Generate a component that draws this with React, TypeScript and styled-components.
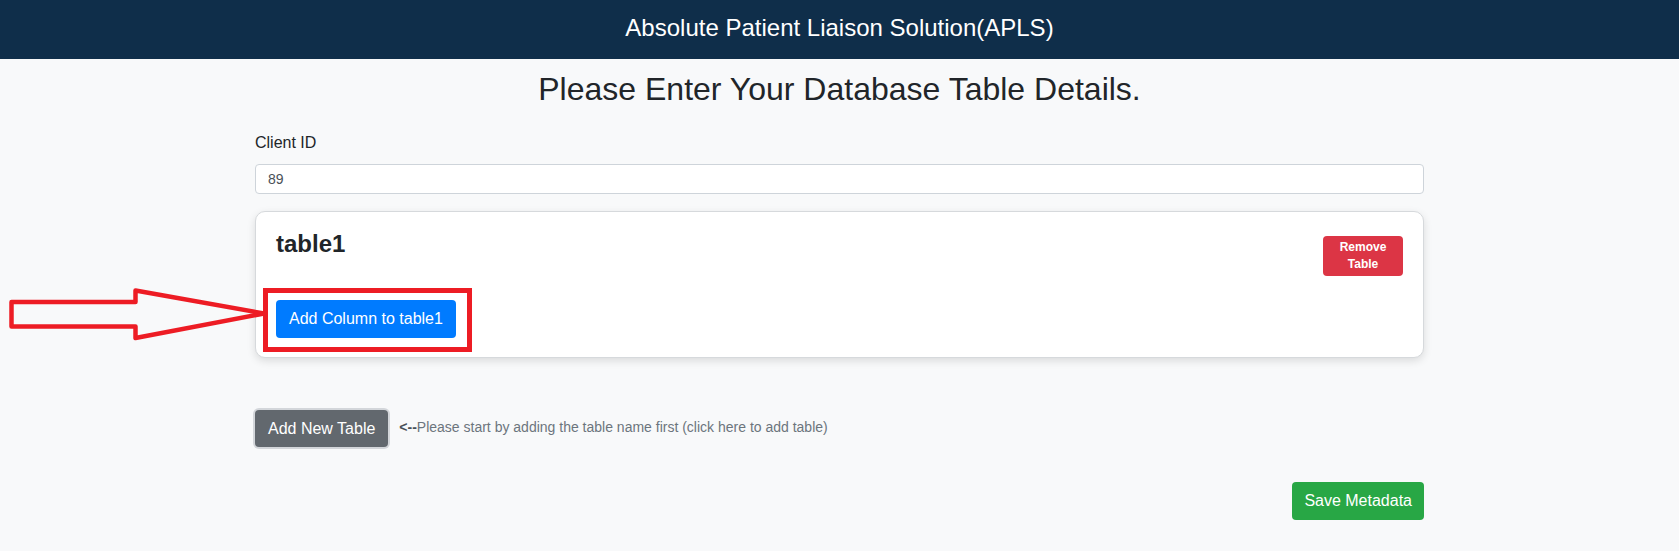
import React from "react";
import styled, { createGlobalStyle } from "styled-components";

const GlobalStyle = createGlobalStyle`
  html, body { margin: 0; padding: 0; }
  body {
    background: #f8f9fa;
    font-family: "Liberation Sans", Arial, sans-serif;
    color: #212529;
  }
  * { box-sizing: border-box; }
`;

const Header = styled.header`
  height: 59px;
  background: #0f2e4a;
  color: #ffffff;
  text-align: center;
  padding-top: 16px;
  font-size: 24px;
  line-height: 24px;
`;

const Container = styled.main`
  width: 1169px;
  margin: 0 auto;
`;

const Title = styled.h2`
  margin: 11px 0 0;
  font-size: 32px;
  font-weight: 400;
  line-height: 1.2;
  text-align: center;
  color: #212529;
`;

const Label = styled.label`
  display: block;
  margin-top: 23px;
  font-size: 16px;
  line-height: 24px;
  color: #212529;
`;

const Input = styled.input`
  display: block;
  width: 100%;
  height: 30px;
  margin-top: 9px;
  padding: 0 12px;
  font-family: inherit;
  font-size: 14px;
  color: #495057;
  background: #fff;
  border: 1px solid #ced4da;
  border-radius: 4px;
  outline: none;
`;

const Card = styled.section`
  margin-top: 17px;
  background: #fff;
  border: 1px solid #d6d9dc;
  border-radius: 10px;
  padding: 18px 20px 19px;
  box-shadow: 0 3px 8px rgba(0, 0, 0, 0.12);
`;

const CardHead = styled.div`
  display: flex;
  justify-content: space-between;
  align-items: flex-start;
`;

const TableName = styled.h4`
  margin: 0;
  font-size: 24px;
  font-weight: 700;
  line-height: 1.2;
  color: #212529;
`;

const Btn = styled.button<{ $bg: string }>`
  font-family: inherit;
  font-size: 16px;
  line-height: 24px;
  padding: 7px 12px;
  color: #fff;
  background: ${(p) => p.$bg};
  border: none;
  border-radius: 4px;
  cursor: pointer;
  white-space: nowrap;
`;

const RemoveBtn = styled(Btn)`
  width: 80px;
  height: 40px;
  margin-top: 6px;
  padding: 3px 8px;
  font-size: 12px;
  font-weight: 700;
  line-height: 17px;
  white-space: normal;
`;

const AddColumnBtn = styled(Btn)`
  height: 38px;
  padding: 7px 13px;
`;

const Highlight = styled.div`
  position: relative;
  display: inline-block;
  margin-top: 24px;
  vertical-align: top;
`;

const HighlightBox = styled.span`
  position: absolute;
  left: -13px;
  top: -12px;
  right: -16px;
  bottom: -14px;
  border: 5px solid #ed1c24;
  pointer-events: none;
`;

const Arrow = styled.svg`
  position: absolute;
  left: -276px;
  top: -20px;
  width: 270px;
  height: 70px;
  overflow: visible;
  pointer-events: none;
`;

const AddRow = styled.div`
  display: flex;
  align-items: center;
  margin-top: 52px;
`;

const AddTableBtn = styled(Btn)`
  height: 37px;
  padding: 6px 13px;
  box-shadow: 0 0 0 2px #d3d6da;
`;

const Hint = styled.span`
  margin-left: 11px;
  padding-bottom: 4px;
  font-size: 14px;
  color: #6c757d;
`;

const HintArrow = styled.b`
  color: #495057;
`;

const Footer = styled.div`
  display: flex;
  justify-content: flex-end;
  margin-top: 35px;
`;

const SaveBtn = styled(Btn)`
  height: 38px;
  padding: 7px 12px;
`;

export default function App() {
  return (
    <>
      <GlobalStyle />
      <Header>Absolute Patient Liaison Solution(APLS)</Header>
      <Container>
        <Title>Please Enter Your Database Table Details.</Title>
        <Label htmlFor="client">Client ID</Label>
        <Input id="client" defaultValue="89" />
        <Card>
          <CardHead>
            <TableName>table1</TableName>
            <RemoveBtn $bg="#dc3545">Remove Table</RemoveBtn>
          </CardHead>
          <Highlight>
            <AddColumnBtn $bg="#007bff">Add Column to table1</AddColumnBtn>
            <HighlightBox />
            <Arrow viewBox="0 0 270 70">
              <polygon
                points="11.5,22 135.5,22 135.5,10.5 264,33.5 135.5,58 135.5,46.5 11.5,46.5"
                fill="none"
                stroke="#ed1c24"
                strokeWidth="4.5"
                strokeLinejoin="round"
              />
            </Arrow>
          </Highlight>
        </Card>
        <AddRow>
          <AddTableBtn $bg="#62686e">Add New Table</AddTableBtn>
          <Hint>
            <HintArrow>&lt;--</HintArrow>Please start by adding the table name first (click here to add table)
          </Hint>
        </AddRow>
        <Footer>
          <SaveBtn $bg="#28a745">Save Metadata</SaveBtn>
        </Footer>
      </Container>
    </>
  );
}
